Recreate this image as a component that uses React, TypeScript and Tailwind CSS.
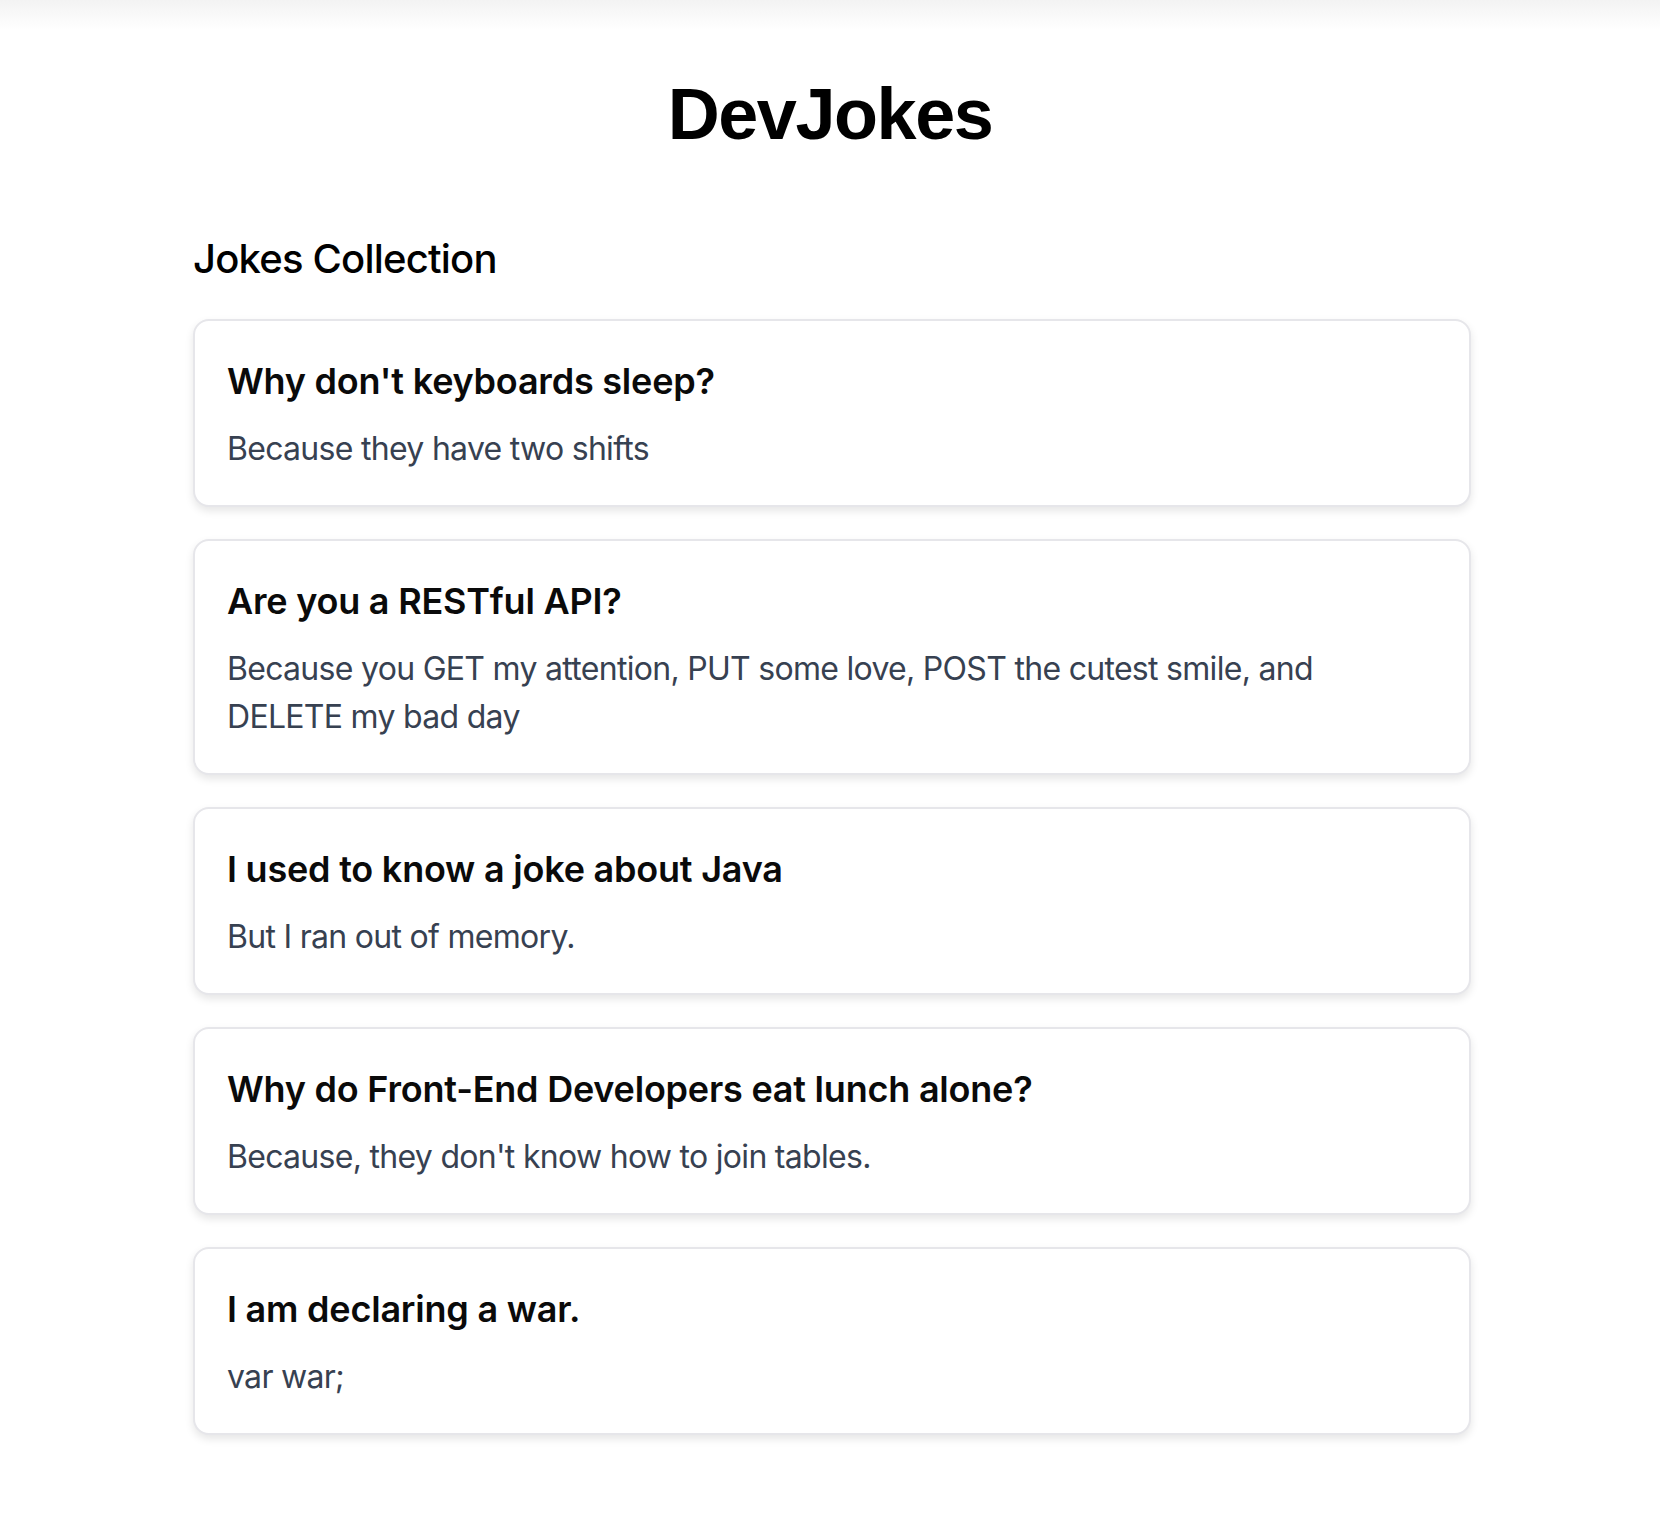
const jokes = [
  {
    setup: "Why don't keyboards sleep?",
    punchline: "Because they have two shifts",
  },
  {
    setup: "Are you a RESTful API?",
    punchline:
      "Because you GET my attention, PUT some love, POST the cutest smile, and DELETE my bad day",
  },
  {
    setup: "I used to know a joke about Java",
    punchline: "But I ran out of memory.",
  },
  {
    setup: "Why do Front-End Developers eat lunch alone?",
    punchline: "Because, they don't know how to join tables.",
  },
  {
    setup: "I am declaring a war.",
    punchline: "var war;",
  },
];

function JokeCard({ setup, punchline }: { setup: string; punchline: string }) {
  return (
    <article className="rounded-2xl border-2 border-[#e6e6ea] bg-white px-[32px] py-8 shadow-[0_4px_9px_rgba(0,0,0,0.1)]">
      <h3 className="mb-4 text-[36px] font-semibold leading-[56px] tracking-[-0.006em] text-[#0a0a0a]">
        {setup}
      </h3>
      <p className="max-w-[1150px] text-[32px] leading-[48px] tracking-[-0.022em] text-[#374151]">
        {punchline}
      </p>
    </article>
  );
}

export default function App() {
  return (
    <div className="min-h-screen bg-white font-['Inter','Noto_Sans',sans-serif] antialiased">
      {/* faint top edge */}
      <div className="h-[30px] bg-gradient-to-b from-[#f3f3f3] to-white" />

      <header className="pt-[48px] text-center">
        <h1 className="font-['Liberation_Sans','Arial',sans-serif] text-[72px] font-bold leading-none tracking-[-0.02em] text-black">
          DevJokes
        </h1>
      </header>

      <main className="mx-auto w-[1282px] pl-1 pt-[81px] pb-24">
        <h2 className="mb-8 text-[40px] font-medium leading-[56px] tracking-[-0.02em] text-black">
          Jokes Collection
        </h2>

        <div className="flex flex-col gap-[32px]">
          {jokes.map((joke) => (
            <JokeCard key={joke.setup} setup={joke.setup} punchline={joke.punchline} />
          ))}
        </div>
      </main>
    </div>
  );
}
